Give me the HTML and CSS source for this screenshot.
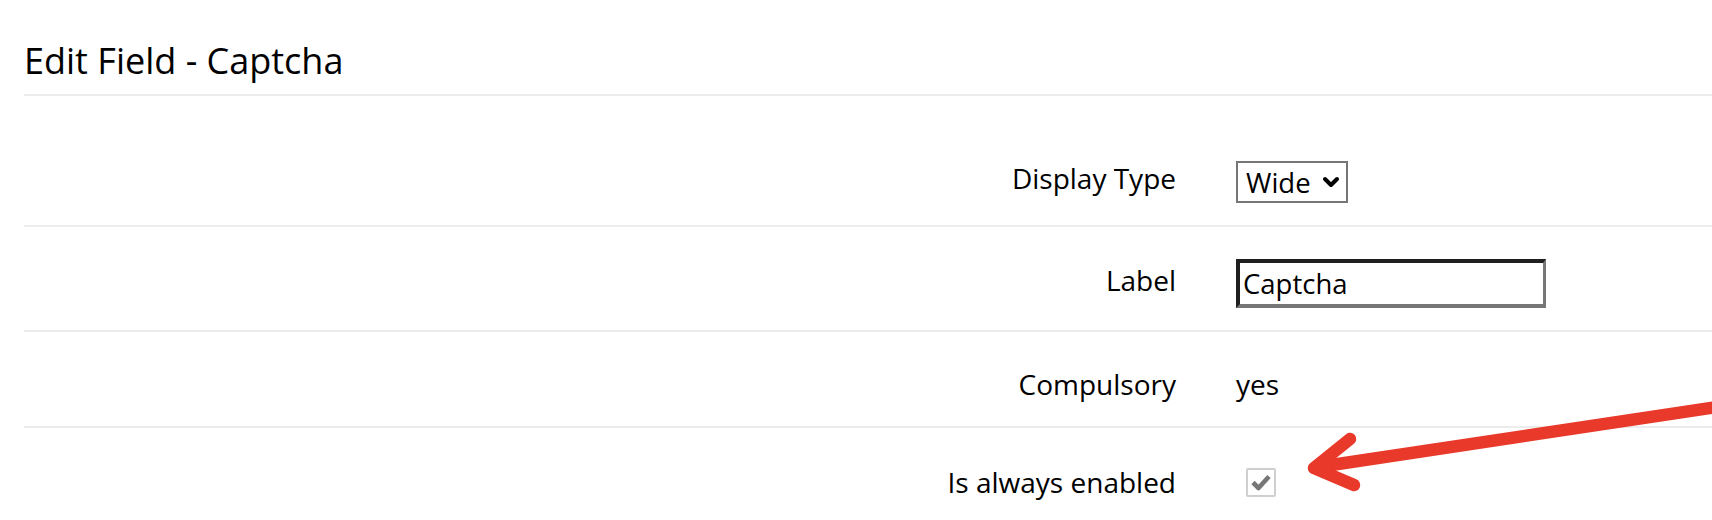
FILE: index.html
```html
<!DOCTYPE html>
<html lang="en">
  <head>
    <meta charset="UTF-8" />
    <meta name="viewport" content="width=device-width, initial-scale=1.0" />
    <title>Edit Field - Captcha</title>
    <link rel="stylesheet" href="styles.css">
  </head>

  <body>
    <div class="page">
      <div class="page-header">
        <h2>Edit Field - Captcha</h2>
      </div>

      <form class="field-form">
        <div class="form-row row-select">
          <label class="row-label" for="displayType">Display Type</label>
          <div class="row-value">
            <div class="select-wrap">
              <select id="displayType" name="displayType">
                <option>Wide</option>
                <option>Narrow</option>
              </select>
              <svg class="select-arrow" width="18" height="12" viewBox="0 0 18 12">
                <path d="M3 3 L9 9 L15 3" fill="none" stroke="#000" stroke-width="4" stroke-linecap="round" stroke-linejoin="round" />
              </svg>
            </div>
          </div>
        </div>

        <div class="form-row row-input">
          <label class="row-label" for="label">Label</label>
          <div class="row-value">
            <input type="text" id="label" name="label" value="Captcha" />
          </div>
        </div>

        <div class="form-row">
          <span class="row-label">Compulsory</span>
          <div class="row-value">yes</div>
        </div>

        <div class="form-row last">
          <span class="row-label">Is always enabled</span>
          <div class="row-value">
            <span class="check-box">
              <svg width="26" height="25" viewBox="0 0 26 25">
                <path d="M5 12.5 L10.5 18 L21 6.5" fill="none" stroke="#777777" stroke-width="4.6" stroke-linejoin="round" />
              </svg>
            </span>
          </div>
        </div>
      </form>
    </div>

    <!-- annotation arrow drawn over the screenshot -->
    <svg class="annotation" width="1712" height="520" viewBox="0 0 1712 520">
      <g fill="none" stroke="#e8392b" stroke-width="12.5" stroke-linecap="round" stroke-linejoin="round">
        <path d="M1730 405 L1318 467" />
        <path d="M1350 439 L1314 468 L1354 485" />
      </g>
    </svg>
  </body>
</html>
```

FILE: styles.css
```css
* {
  margin: 0;
  padding: 0;
  box-sizing: border-box;
}

html,
body {
  overflow: hidden;
}

body {
  font-family: "Open Sans", "Noto Sans", sans-serif;
  color: #000;
  background-color: #ffffff;
  height: 520px;
  position: relative;
}

.page {
  padding-left: 24px;
}

.page-header {
  padding-top: 37px;
  padding-bottom: 9px;
  border-bottom: 2px solid #ececec;
}

h2 {
  font-size: 36px;
  font-weight: normal;
  line-height: 48px;
}

.field-form {
  margin-top: 33px;
}

.form-row {
  display: flex;
  align-items: center;
  padding: 32px 0 22px;
  border-bottom: 2px solid #ececec;
  font-size: 28px;
  line-height: 40px;
}

/* labels sit a little above the middle of their controls */
.row-select .row-label {
  align-self: flex-start;
  margin-top: -3.5px;
}

.row-input .row-label {
  align-self: flex-start;
  margin-top: 0.5px;
}

.form-row.last {
  padding-top: 34px;
}

.row-label {
  width: 1152px;
  text-align: right;
  flex-shrink: 0;
}

.row-value {
  margin-left: 60px;
}

.select-wrap {
  position: relative;
  width: 112px;
}

select {
  appearance: none;
  -webkit-appearance: none;
  width: 112px;
  height: 42px;
  border: 2px solid #767676;
  border-radius: 0;
  background-color: #ffffff;
  font-family: inherit;
  font-size: 27.5px;
  color: #000;
  padding: 0 30px 0 8px;
  outline: none;
}

.select-arrow {
  position: absolute;
  top: 15px;
  left: 86px;
  pointer-events: none;
}

input[type="text"] {
  width: 310px;
  height: 49px;
  border-style: solid;
  border-width: 4px 3px 4px 4px;
  border-color: #1f1f1f #777777 #777777 #1f1f1f;
  padding: 0 3px;
  font-family: inherit;
  font-size: 27.5px;
  color: #000;
  outline: none;
}

.check-box {
  display: flex;
  align-items: center;
  justify-content: center;
  width: 30px;
  height: 29px;
  margin-left: 10px;
  border: 2px solid #cfcfcf;
  border-radius: 2px;
  background-color: #ffffff;
}

.annotation {
  position: absolute;
  top: 0;
  left: 0;
  pointer-events: none;
}
```
